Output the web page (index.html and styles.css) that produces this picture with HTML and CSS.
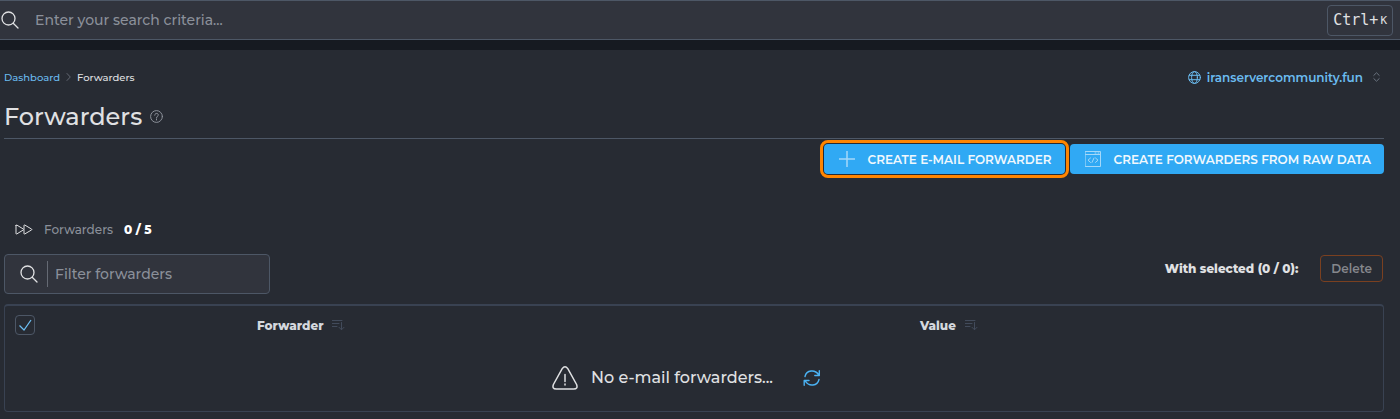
FILE: index.html
```
<!DOCTYPE html>
<html lang="en">
<head>
  <meta charset="UTF-8" />
  <meta name="viewport" content="width=device-width, initial-scale=1" />
  <title>Forwarders</title>
  <link rel="stylesheet" href="styles.css">
</head>
<body>

  <header class="topbar">
    <label for="global-search" aria-label="Search">
      <svg class="icon" width="18" height="18" viewBox="0 0 18 18"><circle cx="7.5" cy="7.5" r="6.5" /><path d="M12.2 12.2L17 17" /></svg>
    </label>
    <input id="global-search" class="global-search" type="text" placeholder="Enter your search criteria...">
    <kbd class="shortcut">Ctrl+<small>K</small></kbd>
  </header>

  <main class="page">
    <div class="page-top">
      <nav class="breadcrumbs">
        <a href="#">Dashboard</a>
        <svg class="icon muted" width="5" height="8" viewBox="0 0 5 8"><path d="M1 .5L4.300 4L1 7.500" /></svg>
        <span>Forwarders</span>
      </nav>
      <button class="domain" type="button">
        <svg class="icon" width="13" height="13" viewBox="0 0 13 13"><circle cx="6.500" cy="6.500" r="5.900" /><ellipse cx="6.500" cy="6.500" rx="2.900" ry="5.900" /><path d="M1.300 4.300H11.700M1.300 8.700H11.700" /></svg>
        <span>iranservercommunity.fun</span>
        <svg class="icon arrows" width="7" height="10" viewBox="0 0 7 10"><path d="M.8 3.400L3.500.8L6.200 3.400M.8 6.600L3.500 9.200L6.200 6.600" /></svg>
      </button>
    </div>

    <div class="title-row">
      <h1>Forwarders</h1>
      <svg class="icon help" width="13" height="13" viewBox="0 0 13 13"><circle cx="6.500" cy="6.500" r="5.900" /><path d="M4.700 5.200C4.700 2.700 8.300 2.800 8.300 5C8.300 6.300 6.500 6.300 6.500 7.700M6.500 8.900V10" /></svg>
    </div>

    <div class="actions">
      <button class="btn highlighted" type="button">
        <svg class="icon" width="16" height="16" viewBox="0 0 16 16"><path d="M8 0V16M0 8H16" stroke-width="1.500" /></svg>
        <span>CREATE E-MAIL FORWARDER</span>
      </button>
      <button class="btn" type="button">
        <svg class="icon" width="16" height="16" viewBox="0 0 16 16"><path d="M.5.5H15.500V15.500H.5ZM.5 3.500H15.500M10 2H11M13 2H14M5.500 7L3 9.200L5.500 11.400M10.500 7L13 9.200L10.500 11.400M9 7L7 11.400" /></svg>
        <span>CREATE FORWARDERS FROM RAW DATA</span>
      </button>
    </div>

    <div class="usage">
      <svg class="icon" width="18" height="11" viewBox="0 0 18 11"><path d="M1 1.500V9.500Q1 10.400 1.900 9.900L8.400 5.900Q9 5.500 8.400 5.100L1.900 1.100Q1 .6 1 1.500ZM9 5V1.500Q9 .6 9.900 1.100L16.600 5.100Q17.200 5.500 16.600 5.900L9.900 9.900Q9 10.400 9 9.500V6" /></svg>
      <span class="usage-label">Forwarders</span>
      <b>0 / 5</b>
    </div>

    <div class="toolbar">
      <div class="filter">
        <label for="filter" aria-label="Filter">
          <svg class="icon" width="18" height="18" viewBox="0 0 18 18"><circle cx="7.500" cy="7.500" r="6.500" /><path d="M12.200 12.200L17 17" /></svg>
        </label>
        <input id="filter" type="text" placeholder="Filter forwarders">
      </div>
      <div class="bulk">
        <b>With selected (0 / 0):</b>
        <button class="delete" type="button" disabled>Delete</button>
      </div>
    </div>

    <div class="table-box">
      <table>
        <thead>
          <tr>
            <th class="col-check"><input type="checkbox" aria-label="Select all" checked></th>
            <th class="col-forwarder">
              <span class="sort">Forwarder
                <svg class="icon" width="13" height="12" viewBox="0 0 13 12"><path d="M0 1.500H10M0 4.500H7M0 7.500H5M9.500 3.500V10.500M7 8.300L9.500 10.800L12 8.300" /></svg>
              </span>
            </th>
            <th class="col-value">
              <span class="sort">Value
                <svg class="icon" width="13" height="12" viewBox="0 0 13 12"><path d="M0 1.500H10M0 4.500H7M0 7.500H5M9.500 3.500V10.500M7 8.300L9.500 10.800L12 8.300" /></svg>
              </span>
            </th>
            <th class="col-end"></th>
          </tr>
        </thead>
        <tbody>
          <tr>
            <td colspan="4">
              <div class="empty">
                <svg class="icon warning" width="26" height="24" viewBox="0 0 26 24"><path d="M10.200 2.600Q13 -1 15.800 2.600L24.600 18.500Q26.200 22.800 21.800 23H4.200Q-.2 22.800 1.400 18.500ZM13 8.500V15.500M13 18V19" /></svg>
                <span>No e-mail forwarders...</span>
                <button class="refresh" type="button" aria-label="Refresh">
                  <svg class="icon" width="18" height="16" viewBox="0 0 18 16"><path d="M2 6.500C3.500 0 12 -1 15.700 4.800M16.300 .8V5.500H11.800M16 9.500C14.500 16 6 17 2.300 11.200M1.200 15.200V10.500H6" /></svg>
                </button>
              </div>
            </td>
          </tr>
        </tbody>
      </table>
    </div>
  </main>

</body>
</html>
```
FILE: styles.css
```
:root {
  --bg: #272b33;
  --field: #31343d;
  --line: #4d5766;
  --table-line: #394252;
  --text: #e0e1e3;
  --muted: #8b909a;
  --link: #6bbcf0;
  --blue: #30a9f4;
}

* {
  box-sizing: border-box;
}

body {
  margin: 0;
  min-height: 100vh;
  background: var(--bg);
  color: var(--text);
  font-family: "Montserrat", "Inter", sans-serif;
  font-size: 12px;
  font-weight: 500;
}

input,
button {
  font: inherit;
}

input[type="text"] {
  min-width: 0;
  padding: 0;
  border: 0;
  outline: 0;
  background: transparent;
  color: var(--text);
}

input::placeholder {
  color: var(--muted);
  opacity: 1;
}

label {
  display: flex;
}

b {
  font-weight: 800;
}

.icon {
  flex: none;
  fill: none;
  stroke: currentColor;
  stroke-linecap: round;
  stroke-linejoin: round;
}

/* top search */
.topbar {
  display: flex;
  align-items: center;
  gap: 16px;
  height: 40px;
  padding: 0 7px 0 1px;
  border-top: 1px solid var(--line);
  border-bottom: 1px solid var(--line);
  background: var(--field);
}

.topbar .icon,
.filter .icon {
  stroke-width: 1.3;
}

.global-search {
  flex: 1;
  height: 36px;
  font-size: 14px;
}

.shortcut {
  padding: 0 5px;
  border: 1px solid var(--line);
  border-radius: 4px;
  font-family: "DejaVu Sans Mono", monospace;
  font-size: 15px;
  font-weight: 400;
  line-height: 29px;
}

.shortcut small {
  margin-left: 2px;
  font-size: 11px;
  vertical-align: 1px;
}

/* page head */
.page {
  padding: 15px 16px 7px 4px;
  border-top: 10px solid #161a21;
}

.page-top,
.toolbar {
  display: flex;
  align-items: center;
  justify-content: space-between;
}

.page-top {
  height: 24px;
}

.breadcrumbs {
  display: flex;
  align-items: center;
  gap: 6px;
  font-size: 10px;
}

.breadcrumbs a {
  color: var(--link);
  text-decoration: none;
}

.muted {
  color: #626873;
}

.domain {
  display: flex;
  align-items: center;
  gap: 6px;
  padding: 0 4px 0 0;
  border: 0;
  background: none;
  color: var(--link);
  font-weight: 600;
}

.arrows {
  margin-left: 4px;
  color: #6c7581;
}

.title-row {
  display: flex;
  align-items: center;
  gap: 8px;
  height: 50px;
  padding-top: 6px;
  border-bottom: 1px solid var(--line);
}

h1 {
  margin: 0;
  font-size: 24px;
  font-weight: 500;
  line-height: 32px;
}

.help {
  color: #8d929b;
}

/* buttons */
.actions {
  display: flex;
  justify-content: flex-end;
  gap: 5px;
  margin-top: 5px;
}

.btn {
  display: flex;
  align-items: center;
  gap: 13px;
  height: 30px;
  padding: 0 13px 0 15px;
  border: 0;
  border-radius: 4px;
  background: var(--blue);
  color: #f1f8fd;
  font-weight: 600;
}

.btn .icon {
  opacity: 0.6;
}

.highlighted {
  outline: 3px solid #ff8500;
  outline-offset: 1px;
}

/* usage and filter */
.usage {
  display: flex;
  align-items: center;
  gap: 11px;
  height: 20px;
  margin-top: 45px;
  padding-left: 11px;
}

.usage-label {
  color: var(--muted);
}

.usage b {
  color: #fff;
}

.toolbar {
  margin-top: 15px;
}

.filter {
  display: flex;
  align-items: center;
  width: 266px;
  height: 40px;
  padding: 0 10px 0 15px;
  border: 1px solid var(--line);
  border-radius: 4px;
  background: var(--field);
}

.filter label {
  align-items: center;
  height: 26px;
  padding-right: 9px;
  border-right: 1px solid #656a74;
}

.filter input {
  flex: 1;
  height: 36px;
  padding-left: 7px;
  font-size: 14px;
}

.bulk {
  display: flex;
  align-items: center;
  gap: 22px;
  margin-top: -12px;
  padding-right: 1px;
}

.delete {
  height: 27px;
  padding: 0 10px;
  border: 1px solid #7a4020;
  border-radius: 4px;
  background: none;
  color: #85878c;
  font-weight: 600;
}

/* table */
.table-box {
  margin-top: 10px;
  border: 1px solid var(--table-line);
  border-top-width: 2px;
  border-radius: 4px;
}

table {
  width: 100%;
  border-collapse: collapse;
  table-layout: fixed;
}

th,
td {
  padding: 0;
}

th {
  height: 38px;
  color: #d4d8de;
  font-weight: 800;
}

.col-check {
  width: 3%;
  padding-left: 10px;
  text-align: left;
}

.col-forwarder {
  width: 37%;
}

.col-end {
  width: 3%;
}

.sort {
  display: inline-flex;
  align-items: center;
  gap: 9px;
}

.sort .icon {
  color: #424b5b;
}

input[type="checkbox"] {
  display: block;
  appearance: none;
  width: 20px;
  height: 20px;
  margin: 0;
  border: 1px solid var(--line);
  border-radius: 4px;
}

input[type="checkbox"]:checked {
  background: url("data:image/svg+xml,%3Csvg xmlns='http://www.w3.org/2000/svg' viewBox='0 0 18 18'%3E%3Cpath d='M3.500 9.500L8 14L15 4' fill='none' stroke='%236bbcf0' stroke-width='1.300'/%3E%3C/svg%3E") center no-repeat;
}

.empty {
  display: flex;
  align-items: center;
  justify-content: center;
  height: 67px;
  padding-right: 15px;
  font-size: 16px;
}

.warning {
  margin-right: 13px;
  stroke-width: 1.5;
}

.refresh {
  display: flex;
  margin-left: 30px;
  padding: 0;
  border: 0;
  background: none;
  color: #4bb2f3;
}

.refresh .icon {
  stroke-width: 1.4;
}
```
